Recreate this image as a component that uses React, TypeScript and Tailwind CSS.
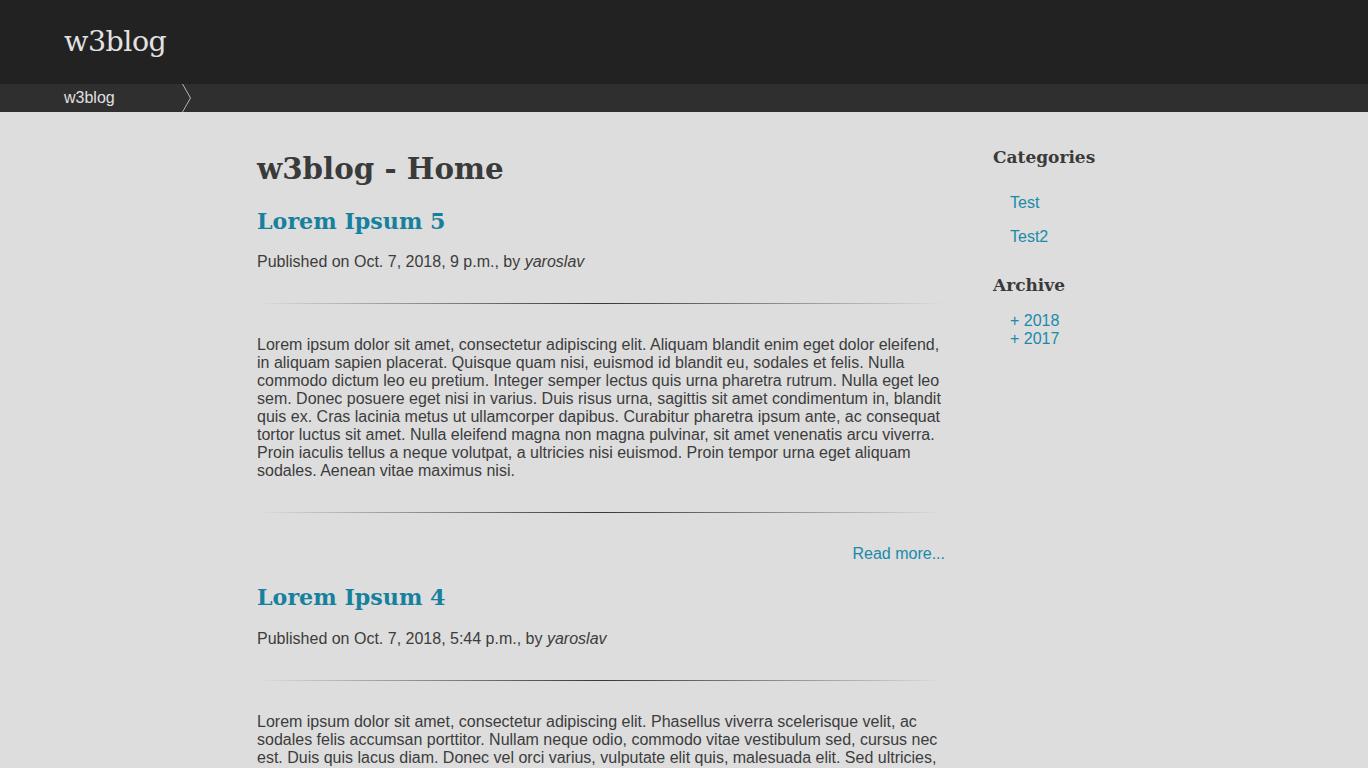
import React from "react";

const serif = { fontFamily: '"DejaVu Serif", Georgia, serif' };

function Hr() {
  return (
    <div className="h-px w-full bg-[linear-gradient(to_right,rgba(0,0,0,0),rgba(0,0,0,0.75),rgba(0,0,0,0))]" />
  );
}

const p1 =
  "Lorem ipsum dolor sit amet, consectetur adipiscing elit. Aliquam blandit enim eget dolor eleifend, in aliquam sapien placerat. Quisque quam nisi, euismod id blandit eu, sodales et felis. Nulla commodo dictum leo eu pretium. Integer semper lectus quis urna pharetra rutrum. Nulla eget leo sem. Donec posuere eget nisi in varius. Duis risus urna, sagittis sit amet condimentum in, blandit quis ex. Cras lacinia metus ut ullamcorper dapibus. Curabitur pharetra ipsum ante, ac consequat tortor luctus sit amet. Nulla eleifend magna non magna pulvinar, sit amet venenatis arcu viverra. Proin iaculis tellus a neque volutpat, a ultricies nisi euismod. Proin tempor urna eget aliquam sodales. Aenean vitae maximus nisi.";
const p2 =
  "Lorem ipsum dolor sit amet, consectetur adipiscing elit. Phasellus viverra scelerisque velit, ac sodales felis accumsan porttitor. Nullam neque odio, commodo vitae vestibulum sed, cursus nec est. Duis quis lacus diam. Donec vel orci varius, vulputate elit quis, malesuada elit. Sed ultricies, nisl vitae dictum congue, ipsum nunc tincidunt nisi, vel volutpat lacus leo vitae neque. Praesent euismod magna at ex rhoncus, in finibus purus aliquam.";

export default function App() {
  return (
    <div
      className="min-h-screen bg-[#dddddd] text-[#3c3c3c]"
      style={{ fontFamily: '"Liberation Sans", Arial, sans-serif' }}
    >
      <header className="h-[84px] bg-[#222222] flex items-center pl-[64px]">
        <span className="text-[28.5px] leading-[40px] text-[#e2e2e2] tracking-[-0.5px]" style={serif}>
          w3blog
        </span>
      </header>
      <nav className="h-[28px] bg-[#2f2f2f] flex items-stretch">
        <span className="pl-[64px] w-[182px] text-[16px] leading-[28px] text-[#e0e0e0]">w3blog</span>
        <svg width="10" height="28" viewBox="0 0 10 28" className="block">
          <polyline points="0.5,0 8.5,14 0.5,28" fill="none" stroke="#b5b5b5" strokeWidth="1" />
        </svg>
      </nav>
      <div className="flex">
        <main className="ml-[257px] w-[688px] pt-[38px]">
          <h1 className="text-[29.3px] leading-[37px] font-bold text-[#3a3a3a]" style={serif}>
            w3blog - Home
          </h1>
          <h2 className="mt-[20px] text-[22.2px] leading-[28px] font-bold text-[#17819d]" style={serif}>
            Lorem Ipsum 5
          </h2>
          <p className="mt-[18px] text-[16px] leading-[18px]">
            Published on Oct. 7, 2018, 9 p.m., by <em>yaroslav</em>
          </p>
          <div className="mt-[32px]">
            <Hr />
          </div>
          <p className="mt-[32px] text-[16px] leading-[18px]">{p1}</p>
          <div className="mt-[32px]">
            <Hr />
          </div>
          <div className="mt-[32px] text-right text-[16px] leading-[18px]">
            <a className="text-[#1a8aab]">Read more...</a>
          </div>
          <h2 className="mt-[20px] text-[22.2px] leading-[28px] font-bold text-[#17819d]" style={serif}>
            Lorem Ipsum 4
          </h2>
          <p className="mt-[19px] text-[16px] leading-[18px]">
            Published on Oct. 7, 2018, 5:44 p.m., by <em>yaroslav</em>
          </p>
          <div className="mt-[32px]">
            <Hr />
          </div>
          <p className="mt-[32px] text-[16px] leading-[18px]">{p2}</p>
        </main>
        <aside className="ml-[48px] pt-[34px]">
          <h3 className="text-[17px] leading-[22px] font-bold text-[#3a3a3a]" style={serif}>
            Categories
          </h3>
          <ul className="mt-[26px] pl-[17px] text-[16px] leading-[18px] text-[#1a8aab]">
            <li>Test</li>
            <li className="mt-[16px]">Test2</li>
          </ul>
          <h3 className="mt-[28px] text-[17px] leading-[22px] font-bold text-[#3a3a3a]" style={serif}>
            Archive
          </h3>
          <ul className="mt-[16px] pl-[17px] text-[16px] leading-[18px] text-[#1a8aab]">
            <li>+ 2018</li>
            <li>+ 2017</li>
          </ul>
        </aside>
      </div>
    </div>
  );
}
